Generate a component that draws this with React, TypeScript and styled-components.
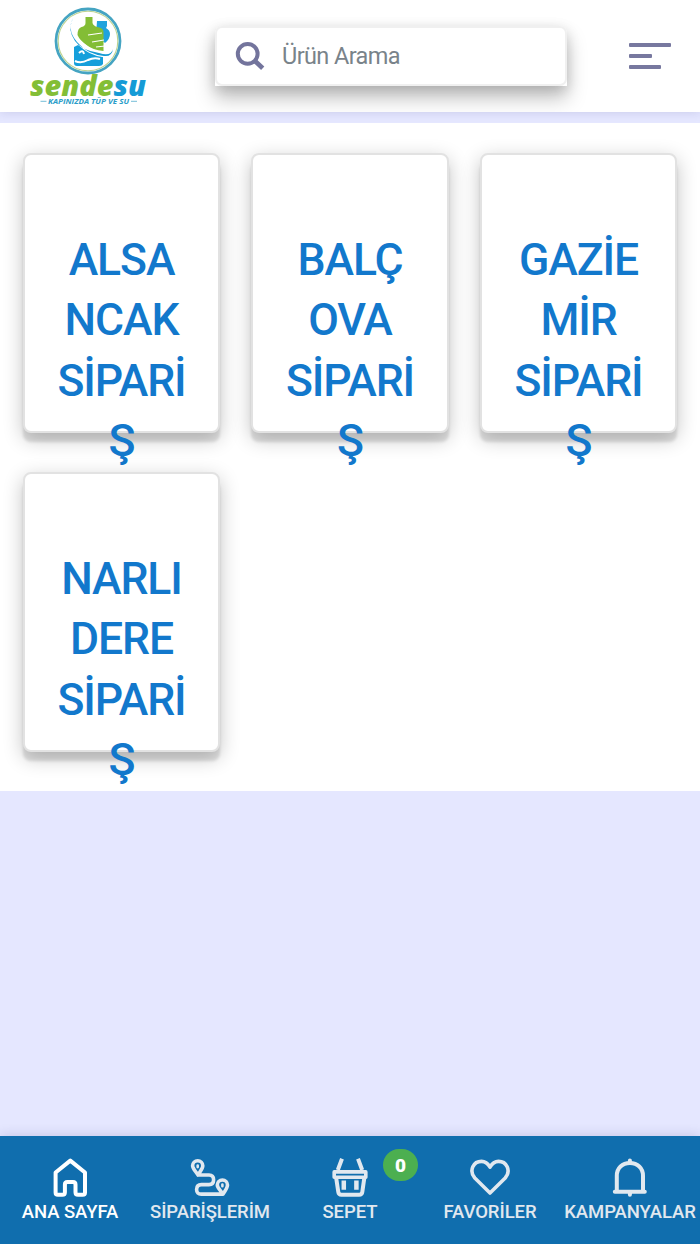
import React from "react";
import styled, { createGlobalStyle } from "styled-components";

const GlobalStyle = createGlobalStyle`
  * { box-sizing: border-box; }
  body { margin: 0; background: #e5e7ff; font-family: Roboto, "Liberation Sans", sans-serif; }
`;

const Screen = styled.div`
  height: 1244px;
  display: flex;
  flex-direction: column;
  overflow: hidden;
`;

const HeaderShade = styled.div`
  flex: none;
  box-shadow: 0 1px 9px rgba(40, 40, 110, 0.13);
  margin-bottom: 11px;
`;

const Header = styled.header`
  height: 112px;
  padding: 0 29.5px 0 27px;
  display: flex;
  align-items: flex-start;
  background: #fff;
  overflow: hidden;
`;

const Logo = styled.svg`
  width: 122px;
  height: 112px;
  flex: none;
`;

const SearchBox = styled.div`
  margin: 26px 0 0 66px;
  width: 352px;
  height: 60px;
  flex: none;
  background: #fff;
  border-radius: 7px 7px 0 0;
  box-shadow: 0 12px 20px rgba(0, 0, 0, 0.25), 0 3px 13px rgba(0, 0, 0, 0.13);
`;

const SearchField = styled.label`
  height: 100%;
  display: flex;
  align-items: center;
  padding-left: 18px;
  border: 2px solid #f0f0f0;
  border-radius: 7px;
`;

const SearchInput = styled.input`
  flex: 1;
  min-width: 0;
  margin-left: 15px;
  padding: 0 0 1px;
  border: 0;
  outline: 0;
  background: none;
  font: 400 23.5px Roboto, "Liberation Sans", sans-serif;
  letter-spacing: -0.6px;
  color: #6c757d;
  &::placeholder { color: #79838a; opacity: 1; }
`;

const MenuButton = styled.button`
  margin: 43px 0 0 auto;
  width: 42px;
  padding: 0;
  border: 0;
  background: none;
  display: flex;
  flex-direction: column;
  gap: 7px;
`;

const MenuLine = styled.span<{ $width: number }>`
  width: ${(p) => p.$width}px;
  height: 4px;
  border-radius: 1px;
  background: #77789f;
`;

const Main = styled.main`
  flex: none;
  height: 668px;
  padding: 30px 23px 0;
  background: #fff;
  display: grid;
  grid-template-columns: 197px 198px 197px;
  grid-auto-rows: 280px;
  align-content: start;
  justify-content: space-between;
  row-gap: 39px;
`;

const Card = styled.article`
  padding-top: 75px;
  border: 2px solid #e2e2e2;
  border-radius: 8px;
  background: #fff;
  box-shadow: 0 9px 3px rgba(0, 0, 0, 0.12), 0 6px 20px rgba(0, 0, 0, 0.24);
`;

const CardTitle = styled.h2`
  margin: 0;
  text-align: center;
  font-size: 44.5px;
  font-weight: 500;
  line-height: 60.4px;
  letter-spacing: -1.1px;
  color: #1278cc;
`;

const TitleLine = styled.span`
  display: block;
`;

const Nav = styled.nav`
  margin-top: auto;
  flex: none;
  height: 108px;
  display: grid;
  grid-template-columns: repeat(5, 140px);
  background: #106eae;
  box-shadow: 0 -1px 11px rgba(40, 40, 110, 0.17);
`;

const NavItem = styled.a<{ $active?: boolean }>`
  position: relative;
  padding-top: 20px;
  display: flex;
  flex-direction: column;
  align-items: center;
  color: ${(p) => (p.$active ? "#fff" : "#e1e8ef")};
`;

const NavIcon = styled.svg`
  width: 44px;
  height: 44px;
  fill: none;
  stroke: currentColor;
  stroke-width: 4;
  stroke-linecap: round;
  stroke-linejoin: round;
`;

const NavLabel = styled.span`
  font-size: 18.5px;
  font-weight: 500;
  line-height: 24px;
  white-space: nowrap;
  letter-spacing: -0.06px;
`;

const Badge = styled.span`
  position: absolute;
  left: 103px;
  top: 13px;
  width: 35px;
  height: 32px;
  border-radius: 17px;
  background: #4caf50;
  color: #fff;
  font-size: 19px;
  font-weight: 900;
  line-height: 33px;
  text-align: center;
`;

const cards = [
  ["ALSA", "NCAK", "SİPARİ", "Ş"],
  ["BALÇ", "OVA", "SİPARİ", "Ş"],
  ["GAZİE", "MİR", "SİPARİ", "Ş"],
  ["NARLI", "DERE", "SİPARİ", "Ş"],
];

const navItems = [
  {
    label: "ANA SAYFA",
    icon: <path d="M22.3 4.6 7.6 16.5v20q0 2.3 2.3 2.3h4.5q2.5 0 2.5-2.5v-7.8q0-2.5 2.5-2.5h5.6q2.5 0 2.5 2.5v7.8q0 2.5 2.5 2.5h4.7q2.3 0 2.3-2.3v-20Z" />,
  },
  {
    label: "SİPARİŞLERİM",
    icon: (
      <>
        <path d="M10 19C7 14.6 4.6 12.4 4.6 9.8a5.1 5.1 0 0 1 10.2 0c0 2.6-2 4.8-4.8 9.2h11q4.6 0 4.6 4.8T21 28.6h-7.6q-4.8 0-4.8 4.8t4.8 4.7H35c3-4.2 4.5-6.2 4.5-9a5.1 5.1 0 0 0-10.2 0c0 2.8 2.7 4.8 5.7 9" strokeWidth="3.6" />
        <path d="M9.7 9.5v1.6M34.4 28.6v1.6" strokeWidth="2.6" />
      </>
    ),
  },
  {
    label: "SEPET",
    icon: (
      <>
        <path d="M14 2.8 9.8 14M30 2.8 34.2 14" strokeLinecap="butt" />
        <path d="M6.2 15.9h31.6v5.4H6.2Z" strokeWidth="3.6" />
        <path d="m8.2 22 2.1 14q.4 2.7 3.1 2.7h17.8q2.7 0 3.1-2.7l2-14" />
        <path d="M15.8 24.5v9.3M28.4 24.5v9.3" strokeWidth="4.5" strokeLinecap="butt" />
      </>
    ),
    count: 0,
  },
  {
    label: "FAVORİLER",
    icon: <path d="M22 37 6.8 22C.5 14.4 5.6 5.4 13.5 5.4c4 0 6.6 2.4 8.5 5.7 1.9-3.3 4.5-5.7 8.5-5.7 7.9 0 13 9 6.7 16.6Z" strokeWidth="3.6" />,
  },
  {
    label: "KAMPANYALAR",
    icon: (
      <>
        <path d="M8.8 35V19.8C8.8 12 14.3 7 21.9 7S35 12 35 19.8V35" strokeWidth="4" />
        <path d="M6.8 35.8h30M21.9 4.4V7M21.9 36v2.8" strokeWidth="4" />
      </>
    ),
  },
];

function BrandLogo() {
  return (
    <Logo viewBox="27 0 122 112">
      <circle cx="88" cy="41" r="32" fill="#fff" stroke="#45a4c2" strokeWidth="2.8" />
      <circle cx="88" cy="41" r="29.8" fill="none" stroke="#bcd391" strokeWidth="1.1" />
      <path d="M97 21h10v5l-1 2q4 2 4 6 0 5-5 9l-9-8Z" fill="#20a3dc" />
      <path d="M85.500 17h7v6q1 3 5 4 6 1 6 5v19q-11-1-17-6-7-5-9-10 0-7 4-8 4-1 4-4Z" fill="#83bd35" />
      <path d="m88 35 14-2M92 42l12-2M96 47l9-1" stroke="#fff" strokeWidth="1.1" />
      <path d="m74 47 4-2 5 3 7 3 13 6v7q-1 2-4 2H77q-3 0-3-3Z" fill="#159fdb" />
      <path d="M79 53q4-4 5 1M75 61q6 3 13-1 6-3 12-1" fill="none" stroke="#fff" strokeWidth="2" />
      <path d="M73 20q-5 12 8 24 9 9 23 11 7 1 9-6" fill="none" stroke="#fff" strokeWidth="4.6" />
      <path d="M73 18q-7 14 7 27 8 9 24 11 8 1 9-7-2 8-14 4Q81 50 75 41 67 30 73 18Z" fill="#159bd5" />
      <text x="30" y="95.5" fontFamily="Open Sans, Noto Sans, sans-serif" fontSize="29" fontWeight="800" fontStyle="italic" textLength="116" lengthAdjust="spacingAndGlyphs">
        <tspan fill="#83be36">sende</tspan>
        <tspan fill="#159bd6">su</tspan>
      </text>
      <path d="M40.500 101.300h6M131 101.300h6" stroke="#75bdd7" strokeWidth="1" />
      <text x="48" y="103.800" fill="#2b9dc9" fontFamily="Open Sans, Noto Sans, sans-serif" fontSize="6.500" fontWeight="700" fontStyle="italic" textLength="81" lengthAdjust="spacingAndGlyphs">KAPINIZDA TÜP VE SU</text>
    </Logo>
  );
}

export default function App() {
  return (
    <Screen>
      <GlobalStyle />
      <HeaderShade>
        <Header>
          <BrandLogo />
          <SearchBox>
            <SearchField>
              <svg width="32" height="32" viewBox="0 0 32 32" fill="none" stroke="#73749c">
                <circle cx="12.7" cy="13.8" r="9.9" strokeWidth="4" />
                <path d="m20 21 7.700 7.200" strokeWidth="4.7" />
              </svg>
              <SearchInput placeholder="Ürün Arama" />
            </SearchField>
          </SearchBox>
          <MenuButton aria-label="Menü">
            <MenuLine $width={42} />
            <MenuLine $width={23} />
            <MenuLine $width={32} />
          </MenuButton>
        </Header>
      </HeaderShade>
      <Main>
        {cards.map((lines) => (
          <Card key={lines[0]}>
            <CardTitle>
              {lines.map((line) => (
                <TitleLine key={line}>{line}</TitleLine>
              ))}
            </CardTitle>
          </Card>
        ))}
      </Main>
      <Nav>
        {navItems.map((item, i) => (
          <NavItem key={item.label} $active={i === 0}>
            <NavIcon viewBox="0 0 44 44">{item.icon}</NavIcon>
            <NavLabel>{item.label}</NavLabel>
            {item.count !== undefined && <Badge>{item.count}</Badge>}
          </NavItem>
        ))}
      </Nav>
    </Screen>
  );
}
